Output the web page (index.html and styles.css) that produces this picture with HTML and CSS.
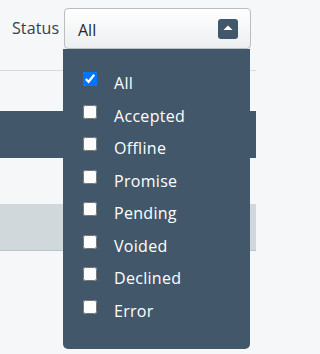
FILE: index.html
```html
<!DOCTYPE html>
<html>
<head>
<meta charset="utf-8">
<link rel="stylesheet" href="styles.css">
</head>
<body>
<div class="page">
  <header class="filter-bar">
    <span class="filter-label">Status</span>
    <div class="select-wrap">
      <div class="select">
        <span class="select-value">All</span>
        <svg class="caret" width="20" height="20" viewBox="0 0 20 20"><rect width="20" height="20" rx="3" fill="#42586a"/><polygon points="5.5,11 14.5,11 10,6.6" fill="#fff"/></svg>
      </div>
      <ul class="dropdown">
        <li><label class="opt"><input type="checkbox" checked><span>All</span></label></li>
        <li><label class="opt"><input type="checkbox"><span>Accepted</span></label></li>
        <li><label class="opt"><input type="checkbox"><span>Offline</span></label></li>
        <li><label class="opt"><input type="checkbox"><span>Promise</span></label></li>
        <li><label class="opt"><input type="checkbox"><span>Pending</span></label></li>
        <li><label class="opt"><input type="checkbox"><span>Voided</span></label></li>
        <li><label class="opt"><input type="checkbox"><span>Declined</span></label></li>
        <li><label class="opt"><input type="checkbox"><span>Error</span></label></li>
      </ul>
    </div>
  </header>
  <div class="spacer"></div>
  <div class="band-dark"></div>
  <div class="band-light"></div>
  <div class="band-grey"></div>
</div>
</body>
</html>
```
FILE: styles.css
```css
html, body {
  margin: 0;
  padding: 0;
  background: #f6f7f9;
  font-family: "Open Sans", "Liberation Sans", sans-serif;
  font-size: 16px;
}
.page {
  width: 256px;
  height: 354px;
  overflow: hidden;
  position: relative;
}
.filter-bar {
  height: 70px;
  border-bottom: 1px solid #d6dbde;
  display: flex;
  align-items: flex-start;
  padding: 8px 5px 0 12px;
  box-sizing: content-box;
  height: 62px;
  position: relative;
  z-index: 2;
}
.filter-label {
  flex: 1;
  color: #34404a;
  line-height: 41px;
  letter-spacing: 0.1px;
}
.select-wrap {
  position: relative;
  width: 187px;
}
.select {
  box-sizing: border-box;
  height: 41px;
  border: 1px solid #b9bec2;
  border-radius: 4px;
  background: linear-gradient(#ffffff, #eceef0);
  display: flex;
  align-items: center;
  justify-content: space-between;
  padding: 0 12px 0 13px;
}
.select-value {
  color: #222a30;
  padding-top: 2px;
}
.caret {
  display: block;
}
.dropdown {
  position: absolute;
  top: 41px;
  left: -1px;
  width: 187px;
  height: 300px;
  box-sizing: border-box;
  margin: 0;
  padding: 23px 0 0 20px;
  list-style: none;
  background: #42586a;
  border-radius: 0 0 5px 5px;
  display: flex;
  flex-direction: column;
  gap: 10.5px;
}
.opt {
  display: flex;
  align-items: flex-start;
  height: 22px;
  color: #ffffff;
  line-height: 22px;
  letter-spacing: 0.3px;
}
.opt input {
  width: 14px;
  height: 14px;
  margin: 0 17px 0 0;
}
.spacer {
  height: 40px;
}
.band-dark {
  height: 47px;
  background: #42586a;
}
.band-light {
  height: 46px;
}
.band-grey {
  height: 46px;
  background: #d1d8dc;
  border-bottom: 1px solid #bcc3c8;
}
```
